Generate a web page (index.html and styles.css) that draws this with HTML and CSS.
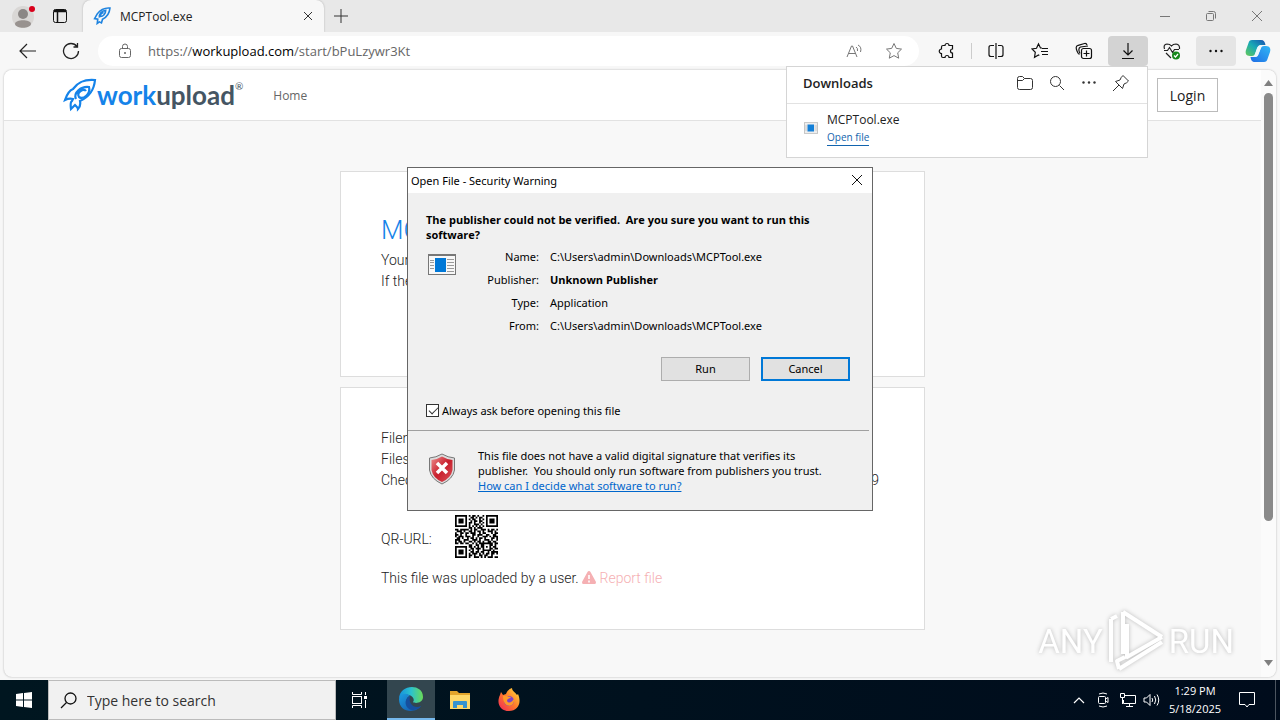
FILE: index.html
```html
<!doctype html>
<html lang="en">
  <head>
    <meta charset="UTF-8">
    <meta name="viewport" content="width=device-width, initial-scale=1.0">
    <title>MCPTool.exe</title>
    <link rel="stylesheet" href="styles.css">
  </head>
  <body>
    <!-- tab strip -->
    <header class="tabstrip">
      <button class="avatar" aria-label="Profile">
        <svg width="24" height="26" viewBox="0 0 24 26"><circle cx="11" cy="14" r="11" fill="#d9d7d5"/><circle cx="11" cy="11" r="5" fill="#8b8785"/><path d="M3 21c0-5 16-5 16 0-1 5-15 5-16 0z" fill="#98928f"/><circle cx="20" cy="6" r="3" fill="#d9001b"/></svg>
      </button>
      <button class="workspaces" aria-label="Tab actions">
        <svg width="16" height="16" viewBox="0 0 16 16" fill="none" stroke="#111"><rect x="1.500" y="1.500" width="13" height="13" rx="2"/><path d="M2 3.500h12M2 2.500h12M5.500 4v10" stroke-width="1.500"/></svg>
      </button>
      <div class="tab">
        <svg class="rocket" width="18" height="18" viewBox="0 0 34 34" fill="none" stroke="#1e83df" stroke-width="3"><path d="M32 2C20 1 14 5 8 13L3 22l6 1-1 8 4-3 4 2 2-7c8-4 13-10 14-21z"/><path d="M12 20c-1-7 4-13 12-14 0 7-5 12-10 12 0-4 3-7 6-7"/></svg>
        <span class="tab-title">MCPTool.exe</span>
        <button class="tab-close" aria-label="Close tab">
          <svg width="10" height="10" viewBox="0 0 10 10" stroke="#333"><path d="M1 1l8 8M9 1L1 9"/></svg>
        </button>
      </div>
      <button class="new-tab" aria-label="New tab">
        <svg width="14" height="14" viewBox="0 0 14 14" stroke="#333"><path d="M7 0v14M0 7h14"/></svg>
      </button>
      <div class="window-controls">
        <button aria-label="Minimize"><svg width="10" height="10" viewBox="0 0 10 10" stroke="#777"><path d="M0 5.500h10"/></svg></button>
        <button aria-label="Restore"><svg width="12" height="12" viewBox="0 0 12 12" fill="none" stroke="#777"><rect x="1.500" y="3.500" width="7" height="7" rx="1"/><path d="M3.500 1.500h5q2 0 2 2v5"/></svg></button>
        <button aria-label="Close"><svg width="12" height="12" viewBox="0 0 12 12" stroke="#777"><path d="M1 1l10 10M11 1L1 11"/></svg></button>
      </div>
    </header>

    <!-- toolbar -->
    <nav class="toolbar">
      <button class="nav-button" aria-label="Back"><svg width="18" height="16" viewBox="0 0 18 16" fill="none" stroke="#222" stroke-width="1.200"><path d="M8 1L1 8l7 7M1 8h16"/></svg></button>
      <button class="nav-button" aria-label="Refresh"><svg width="18" height="18" viewBox="0 0 18 18" fill="none" stroke="#222" stroke-width="1.300"><path d="M15 4.500A7.500 7.500 0 1 0 16.500 9M15.500 1v4h-4"/></svg></button>
      <div class="address">
        <svg class="lock" width="14" height="16" viewBox="0 0 14 16" fill="none" stroke="#666"><rect x="1.500" y="5.500" width="11" height="9" rx="2"/><path d="M4.500 5.500V3.500a2.500 2.500 0 0 1 5 0v2"/><circle cx="7" cy="10" r="1" fill="#666" stroke="none"/></svg>
        <div class="url" role="textbox" contenteditable="true" spellcheck="false" aria-label="Address">https://<b>workupload.com</b>/start/bPuLzywr3Kt</div>
        <button class="address-button" aria-label="Read aloud"><svg width="16" height="16" viewBox="0 0 16 16" fill="none" stroke="#777"><path d="M1 14L5.500 3h1L11 14M2.500 10.500h7M10 4q2 1 1.500 4M12 2q4 2 2.500 7"/></svg></button>
        <button class="address-button" aria-label="Favorite"><svg width="18" height="18" viewBox="0 0 18 18" fill="none" stroke="#777" stroke-linejoin="round"><path d="M9 1.500l2.300 4.900 5.200.7-3.800 3.700 1 5.400L9 13.600l-4.700 2.600 1-5.400L1.500 7.100l5.200-.7z"/></svg></button>
      </div>
      <button class="tool-button" aria-label="Extensions"><svg width="18" height="18" viewBox="0 0 18 18" fill="none" stroke="#111" stroke-width="1.200"><path d="M5 3.500h2a2 2 0 0 1 4 0h3.500V7a2 2 0 0 0 0 4v4.500H11a2 2 0 0 0-4 0H5q-1.500 0-1.500-1.500v-2.500a2.200 2.200 0 0 1 0-4.500V5Q3.500 3.500 5 3.500"/></svg></button>
      <span class="divider"></span>
      <button class="tool-button" aria-label="Split screen"><svg width="18" height="18" viewBox="0 0 18 18" fill="none" stroke="#111" stroke-width="1.200"><path d="M7 3.500H4q-2 0-2 2v7q0 2 2 2h3M11 3.500h3q2 0 2 2v7q0 2-2 2h-3M9 1v16"/></svg></button>
      <button class="tool-button" aria-label="Favorites"><svg width="18" height="18" viewBox="0 0 18 18" fill="none" stroke="#111" stroke-width="1.200"><path d="M11 6L9.500 6 7.500 2 5.500 6.300l-4.500.7 3.300 3.300-.8 5 4-2.300.8.5M11 6.500h6M10 9.500h7M11 12.500h6"/></svg></button>
      <button class="tool-button" aria-label="Collections"><svg width="18" height="18" viewBox="0 0 18 18" fill="none" stroke="#111" stroke-width="1.200"><path d="M4.500 12.500C3 12.500 1 7 1.200 5.500q0-1.500 2-2.200L9.500 1.500q2-.3 2.500 1.500M5 11.500q-2.500-5 .5-6.500l7.500-1"/><rect x="6.500" y="6.500" width="10" height="10" rx="2"/><path d="M11.500 8.500v6M8.500 11.500h6"/></svg></button>
      <button class="tool-button pressed" aria-label="Downloads"><svg width="14" height="18" viewBox="0 0 14 18" fill="none" stroke="#111" stroke-width="1.200"><path d="M7 1v12M2.500 8.500L7 13l4.500-4.500M1 16.500h12"/></svg></button>
      <button class="tool-button" aria-label="Browser essentials"><svg width="18" height="18" viewBox="0 0 18 18" fill="none" stroke="#222" stroke-width="1.200"><path d="M1.500 7Q0 2.500 4 2q3 0 4.500 2Q10 2 13 2q4 .5 3.500 5M1 8.500h3.500l2-3 3 5 2-3H16M3 11l5 5"/><circle cx="13" cy="13.500" r="4" fill="#16871b" stroke="none"/><path d="M11 13.500l1.500 1.500 2.500-3" stroke="#fff"/></svg></button>
      <button class="tool-button active" aria-label="Settings and more"><svg width="16" height="4" viewBox="0 0 16 4" fill="#111"><circle cx="2.500" cy="2" r="1.200"/><circle cx="8" cy="2" r="1.200"/><circle cx="13.500" cy="2" r="1.200"/></svg></button>
      <button class="copilot" aria-label="Copilot">
        <svg width="26" height="24" viewBox="0 0 26 24">
          <defs>
            <linearGradient id="cp-a" x1="0" y1="1" x2="1" y2="0"><stop offset="0" stop-color="#65c958"/><stop offset=".5" stop-color="#18aab6"/><stop offset="1" stop-color="#174fb0"/></linearGradient>
            <linearGradient id="cp-b" x1="0" y1="1" x2="1" y2="0"><stop offset="0" stop-color="#1f6de5"/><stop offset="1" stop-color="#31b7f5"/></linearGradient>
          </defs>
          <path d="M7 1h9c3 0 4 2 4.500 5H17c-3 0-4 1-5 4l-2 5c-1 2-2 2-5 2-4 0-5-3-4-6L3.500 4C4 2 5 1 7 1z" fill="url(#cp-a)"/>
          <path d="M19 23h-9c-3 0-4-2-4.500-5H9c3 0 4-1 5-4l2-5c1-2 2-2 5-2 4 0 5 3 4 6l-2.500 7c-.5 2-1.500 3-3.500 3z" fill="url(#cp-b)"/>
          <path d="M12 9c1-2 2-3 4-3h1l-4 10c-1 2-2 2-4 2z" fill="#edf8fc"/>
        </svg>
      </button>
    </nav>

    <!-- web page -->
    <div class="viewport">
      <div class="site">
        <div class="site-header">
          <a class="logo" href="#">
            <svg width="34" height="34" viewBox="0 0 34 34" fill="none" stroke="#1583e9" stroke-width="2.200"><path d="M32 2C21 1 15 4 10 11q-5 2-8 11 4-2 8-1l-1 2q-2 1-1 8l4-4q3 3 3 4 3-3 2-8c9-4 14-10 15-21z"/><path d="M13 21c-3-6 5-13 13-12 2 7-6 13-10 10-3-5 5-9 7-6"/></svg>
            <span class="logo-work">work</span><span class="logo-upload">upload</span><sup>®</sup>
          </a>
          <a class="nav-link" href="#">Home</a>
          <button class="login">Login</button>
        </div>
        <main class="content">
          <section class="card card-download">
            <h1>MCPTool.exe</h1>
            <p>Your download</p>
            <p>If the download</p>
          </section>
          <section class="card card-info">
            <dl class="file-info">
              <dt>Filename:</dt><dd>MCPTool.exe</dd>
              <dt>Filesize:</dt><dd></dd>
              <dt>Checksum:</dt><dd class="checksum">9</dd>
            </dl>
            <div class="qr-row"><span class="qr-label">QR-URL:</span><svg id="qr" width="43" height="43" viewBox="0 0 25 25"></svg></div>
            <p>This file was uploaded by a user. <a class="report" href="#"><svg width="14" height="13" viewBox="0 0 14 13"><path d="M7 0q1 0 1.500 1L14 11q0 2-1 2H1q-1 0-1-2L5.500 1Q6 0 7 0z" fill="#f5b0b3"/><path d="M7 4v4M7 9.500v2" stroke="#fff" stroke-width="1.600"/></svg> Report file</a></p>
          </section>
        </main>
      </div>
      <div class="scrollbar">
        <svg width="9" height="6" viewBox="0 0 9 6"><path d="M0 6l4.500-6L9 6z" fill="#808080"/></svg>
        <div class="scroll-thumb"></div>
        <svg width="9" height="6" viewBox="0 0 9 6"><path d="M0 0l4.500 6L9 0z" fill="#808080"/></svg>
      </div>
      <div class="watermark">
        <span>ANY</span>
        <svg width="58" height="64" viewBox="0 0 58 64" fill="none" stroke="#fff" stroke-width="4" stroke-linejoin="round"><path d="M16 3v42M16 3l39 25M20 15v33l35-20M4 10v43M4 10l6-3M12 60l43-27M12 60l-2-8 8-4"/></svg>
        <span>RUN</span>
      </div>
    </div>

    <!-- taskbar -->
    <footer class="taskbar">
      <button class="task start" aria-label="Start"><svg width="16" height="16" viewBox="0 0 16 16" fill="#fff"><path d="M0 2l7-1v6.500H0zM8 1l8-1v7.500H8zM0 8.500h7V15l-7-1zM8 8.500h8V16l-8-1z"/></svg></button>
      <label class="search">
        <svg width="17" height="17" viewBox="0 0 17 17" fill="none" stroke="#111" stroke-width="1.300"><circle cx="10.500" cy="6.500" r="5.500"/><path d="M6.500 10.500L1 16"/></svg>
        <input type="text" placeholder="Type here to search" aria-label="Search">
      </label>
      <button class="task task-view" aria-label="Task view"><svg width="18" height="16" viewBox="0 0 18 16" fill="none" stroke="#fff"><path d="M1.500 0v2.500h9V0M1.500 16v-2.500h9V16M14.500 0v3M14.500 8v8"/><rect x="1.500" y="4.500" width="9" height="7"/><path d="M13 5.500h3" stroke-width="3"/></svg></button>
      <button class="task current" aria-label="Microsoft Edge">
        <svg width="24" height="24" viewBox="0 0 24 24">
          <defs>
            <linearGradient id="edge-a"><stop offset="0" stop-color="#1590dd"/><stop offset=".5" stop-color="#2bc2cf"/><stop offset="1" stop-color="#6adb57"/></linearGradient>
            <linearGradient id="edge-b" x1="0" y1="0" x2="1" y2="1"><stop offset="0" stop-color="#1b9de2"/><stop offset="1" stop-color="#1450a4"/></linearGradient>
          </defs>
          <path d="M0 12C0-3 24-4 24 10c0 6-8 7-10 5 2-2 0-6-4-7C5 7 1 9 0 12z" fill="url(#edge-a)"/>
          <path d="M0 12c1-5 7-7 11-3-3 0-4 4-3 7 2 5 9 7 14 3-4 7-22 8-22-7z" fill="url(#edge-b)"/>
          <path d="M11 9c-7 3-5 13 2 14 4 0 8-2 9-4-6 3-13-1-11-10z" fill="#164f9d"/>
        </svg>
      </button>
      <button class="task" aria-label="File Explorer"><svg width="22" height="20" viewBox="0 0 22 20"><path d="M1 1h7l2 2h11v16H1z" fill="#e3a52b"/><path d="M1 5h20v14H1z" fill="#ffd868"/><path d="M4 18v-6q0-1 1-1h12q1 0 1 1v6h-4v-3H8v3z" fill="#3793ce"/></svg></button>
      <button class="task" aria-label="Firefox">
        <svg width="24" height="24" viewBox="0 0 24 24">
          <defs><linearGradient id="ff" x1="1" y1="0" x2="0" y2="1"><stop offset="0" stop-color="#ffe33c"/><stop offset=".5" stop-color="#ff7a2b"/><stop offset="1" stop-color="#f0235a"/></linearGradient></defs>
          <path d="M4 4l2 3 3-1c1-3 3-5 6-6 0 3 3 4 5 7l1-1c4 9 0 17-9 17S-1 15 3 7z" fill="url(#ff)"/>
          <circle cx="12" cy="13" r="5" fill="#7d42c8"/>
          <path d="M6 8c4-1 5 1 8 1-1 2-4 1-4 4 2 3 5 1 7-2 1 9-11 10-11-3z" fill="#ff9a29"/>
        </svg>
      </button>
      <div class="tray">
        <button aria-label="Show hidden icons"><svg width="12" height="8" viewBox="0 0 12 8" fill="none" stroke="#fff" stroke-width="1.200"><path d="M1 7l5-5 5 5"/></svg></button>
        <button aria-label="Meet Now"><svg width="14" height="16" viewBox="0 0 14 16" fill="none" stroke="#fff"><rect x="2.500" y="4.500" width="7" height="7" rx="1"/><path d="M9.500 7L12 5.500v5L9.500 9M3 2q4-2 8 0M3 14q4 2 8 0"/></svg></button>
        <button aria-label="Network"><svg width="17" height="14" viewBox="0 0 17 14" fill="none" stroke="#fff"><path d="M6 2.500h10.500v8H4.500V7M10.500 11v2M7 13.500h7"/><path d="M1.500.500h4v4h-4zM3.500 5v6"/></svg></button>
        <button aria-label="Volume"><svg width="17" height="14" viewBox="0 0 17 14" fill="none" stroke="#fff"><path d="M1 5v4h2.500L7 12.500v-11L3.500 5zM9 5q1.500 2 0 4M11.500 3q2.500 4 0 8M14 1.500q3.500 5.500 0 11"/></svg></button>
        <div class="clock"><span>1:29 PM</span><span>5/18/2025</span></div>
        <button class="notifications" aria-label="Notifications"><svg width="16" height="16" viewBox="0 0 16 16" fill="none" stroke="#fff"><path d="M.5.500h15v12H10l-2 2.500-2-2.500H.5z"/></svg></button>
        <span class="show-desktop"></span>
      </div>
    </footer>

    <!-- downloads flyout -->
    <aside class="downloads">
      <div class="downloads-header">
        <h2>Downloads</h2>
        <button aria-label="Open downloads folder"><svg width="18" height="16" viewBox="0 0 18 16" fill="none" stroke="#333"><path d="M1.500 4v-.5q0-2 2-2h3l2 2h6q2 0 2 2v7q0 2-2 2h-11q-2 0-2-2zM1.500 5.500h5l2-2"/></svg></button>
        <button aria-label="Search downloads"><svg width="16" height="16" viewBox="0 0 16 16" fill="none" stroke="#333"><circle cx="6.500" cy="6.500" r="5"/><path d="M10.500 10.500l4.500 4.500"/></svg></button>
        <button aria-label="More options"><svg width="14" height="4" viewBox="0 0 14 4" fill="#333"><circle cx="1.500" cy="1.500" r="1.200"/><circle cx="7" cy="1.500" r="1.200"/><circle cx="12.500" cy="1.500" r="1.200"/></svg></button>
        <button aria-label="Pin"><svg width="18" height="18" viewBox="0 0 18 18" fill="none" stroke="#333"><path d="M11 1.500L16.500 7q-1.500 2-4.500 3l-1.500 4.500-7-7L8 6q1-3 3-4.500zM7 11l-6 6"/></svg></button>
      </div>
      <div class="download-item">
        <svg width="14" height="12" viewBox="0 0 28 22"><rect x=".5" y=".5" width="27" height="21" fill="#eee" stroke="#999"/><rect x="7" y="4" width="13" height="14" fill="#1480d8"/><path d="M2 7h4M2 11h4M2 15h4M21 7h5M21 11h5M21 15h5" stroke="#aaa"/></svg>
        <div>
          <div class="download-name">MCPTool.exe</div>
          <a href="#">Open file</a>
        </div>
      </div>
    </aside>

    <!-- security warning -->
    <div class="dialog" role="dialog" aria-labelledby="dialog-title">
      <div class="dialog-title">
        <span id="dialog-title">Open File - Security Warning</span>
        <button aria-label="Close"><svg width="12" height="12" viewBox="0 0 12 12" stroke="#111"><path d="M1 1l10 10M11 1L1 11"/></svg></button>
      </div>
      <div class="dialog-body">
        <h3>The publisher could not be verified.&nbsp; Are you sure you want to run this software?</h3>
        <div class="details">
          <svg class="app-icon" width="28" height="21" viewBox="0 0 28 21"><rect x=".5" y=".5" width="27" height="20" fill="#f7f7f7" stroke="#777"/><path d="M0 1h28" stroke="#777" stroke-width="2"/><rect x="7" y="4" width="11" height="14" fill="#0078d7"/><path d="M2 6.500h4M2 8.500h4M2 11.500h4M2 14.500h4M19 5.500h7M19 8.500h7M19 11.500h7M19 14.500h7M19 17.500h7" stroke="#999"/></svg>
          <table>
            <tr><th>Name:</th><td>C:\Users\admin\Downloads\MCPTool.exe</td></tr>
            <tr><th>Publisher:</th><td><b>Unknown Publisher</b></td></tr>
            <tr><th>Type:</th><td>Application</td></tr>
            <tr><th>From:</th><td>C:\Users\admin\Downloads\MCPTool.exe</td></tr>
          </table>
        </div>
        <div class="dialog-buttons">
          <button>Run</button>
          <button class="default">Cancel</button>
        </div>
        <label class="always-ask"><input type="checkbox" checked> Always ask before opening this file</label>
      </div>
      <div class="dialog-footer">
        <svg class="shield" width="28" height="32" viewBox="0 0 28 32">
          <defs><linearGradient id="shield" x1="0" y1="0" x2="1" y2="1"><stop offset="0" stop-color="#ee8d8d"/><stop offset=".5" stop-color="#c81e2c"/><stop offset="1" stop-color="#d9535a"/></linearGradient></defs>
          <path d="M14 1q6 3.500 12.500 4v12Q25 26 14 31 3 26 1.500 17V5Q8 4.500 14 1z" fill="#dcdcdc" stroke="#777"/>
          <path d="M14 3.500Q19 6.500 24.500 7v10Q23 25 14 29 5 25 3.500 17V7Q9 6.500 14 3.500z" fill="url(#shield)"/>
          <path d="M9 10l10 10M19 10L9 20" stroke="#fff" stroke-width="3.500"/>
        </svg>
        <p>This file does not have a valid digital signature that verifies its publisher.&nbsp; You should only run software from publishers you trust.<br><a href="#">How can I decide what software to run?</a></p>
      </div>
    </div>

    <script src="qr.js"></script>
  </body>
</html>
```

FILE: styles.css
```css
* {
  margin: 0;
  padding: 0;
  box-sizing: border-box;
}

body {
  position: relative;
  display: flex;
  flex-direction: column;
  height: 100vh;
  overflow: hidden;
  font-family: "Open Sans", "Noto Sans", sans-serif;
  font-size: 12px;
  color: #222;
  background: #f7f7f7;
}

button {
  display: flex;
  align-items: center;
  justify-content: center;
  border: none;
  background: none;
  font: inherit;
  color: inherit;
}

svg {
  flex-shrink: 0;
}

/* Tab strip */
.tabstrip {
  display: flex;
  height: 32px;
  background: #e8e8e8;
}

.avatar {
  width: 48px;
}

.workspaces {
  width: 24px;
}

.tab {
  display: flex;
  align-items: center;
  width: 241px;
  margin-left: 11px;
  padding: 0 8px 0 10px;
  border-radius: 8px 8px 0 0;
  background: #f7f7f7;
  box-shadow: 0 0 2px #aaa;
}

.tab-title {
  flex: 1;
  margin-left: 9px;
  font-size: 12px;
}

.tab-close {
  width: 16px;
  height: 16px;
}

.new-tab {
  width: 34px;
}

.window-controls {
  display: flex;
  margin-left: auto;
}

.window-controls button {
  width: 46px;
}

/* Toolbar */
.toolbar {
  position: relative;
  display: flex;
  align-items: center;
  gap: 4px;
  height: 38px;
  padding: 0 4px 0 12px;
  background: #f7f7f7;
}

.nav-button {
  width: 32px;
  height: 30px;
  margin-right: 7px;
}

.address {
  flex: 1;
  display: flex;
  align-items: center;
  height: 30px;
  margin-right: 4px;
  padding: 0 5px 0 20px;
  border-radius: 15px;
  background: #fff;
}

.url {
  flex: 1;
  margin-left: 16px;
  font-size: 13px;
  color: #666;
  white-space: nowrap;
}

.url b {
  font-weight: 400;
  color: #000;
}

.address-button {
  width: 40px;
}

.tool-button {
  width: 40px;
  height: 30px;
  border-radius: 4px;
}

.pressed {
  background: #d3d3d3;
}

.active {
  background: #e5e5e5;
}

.divider {
  width: 1px;
  height: 16px;
  background: #ccc;
}

.copilot {
  width: 36px;
}

/* Web page */
.viewport {
  position: relative;
  flex: 1;
  display: flex;
  margin: 0 4px 3px;
  border-radius: 8px;
  background: #f8f8f8;
  box-shadow: 0 0 2px #aaa;
  overflow: hidden;
}

.site {
  flex: 1;
  font-family: Roboto, sans-serif;
  font-size: 14px;
  font-weight: 300;
  line-height: 21px;
}

.site-header {
  display: flex;
  align-items: center;
  height: 51px;
  padding: 0 43px 0 59px;
  border-bottom: 1px solid #e2e2e2;
  background: #fff;
}

.logo {
  display: flex;
  align-items: center;
  font-family: Lato, sans-serif;
  font-size: 26px;
  font-weight: 700;
  text-decoration: none;
}

.logo-work {
  color: #1583e9;
}

.logo-upload {
  color: #455563;
}

.logo sup {
  align-self: flex-start;
  font-size: 10px;
  font-weight: 400;
  line-height: 16px;
  color: #455563;
}

.nav-link {
  margin-left: 30px;
  font-family: "Open Sans", sans-serif;
  font-size: 12px;
  font-weight: 400;
  color: #666;
  text-decoration: none;
}

.login {
  width: 61px;
  height: 34px;
  margin-left: auto;
  border: 1px solid #bbb;
  background: #fff;
  font-family: "Open Sans", sans-serif;
  font-size: 14px;
  font-weight: 400;
}

.content {
  width: 585px;
  margin: 50px auto 0;
}

.card {
  padding: 40px;
  border: 1px solid #ddd;
  background: #fff;
}

.card-download {
  height: 206px;
}

.card-info {
  height: 243px;
  margin-top: 10px;
}

.card h1 {
  margin-bottom: 2px;
  font-size: 26px;
  font-weight: 300;
  line-height: 36px;
  color: #1583e9;
}

.file-info {
  display: grid;
  grid-template-columns: 74px 1fr;
  grid-auto-rows: 21px;
}

.checksum {
  padding-right: 5px;
  text-align: right;
}

.qr-row {
  display: flex;
  align-items: center;
  margin: 24px 0 10px;
}

.qr-label {
  width: 74px;
  padding-top: 5px;
}

.report {
  color: #f5b0b3;
  text-decoration: none;
}

.report svg {
  vertical-align: -1px;
}

.scrollbar {
  display: flex;
  flex-direction: column;
  align-items: center;
  width: 15px;
  padding: 10px 0 11px;
  background: #fbfbfb;
}

.scroll-thumb {
  width: 9px;
  height: 428px;
  margin: 7px 0 auto;
  border-radius: 5px;
  background: #8a8a8a;
}

.watermark {
  position: absolute;
  right: 42px;
  bottom: 4px;
  display: flex;
  align-items: center;
  gap: 4px;
  font-family: Roboto, sans-serif;
  font-size: 33px;
  color: #fff;
  filter: drop-shadow(0 0 2px #bbb);
}

/* Taskbar */
.taskbar {
  display: flex;
  height: 40px;
  color: #fff;
  background: linear-gradient(90deg, #001620, #000c1c);
}

.task {
  width: 48px;
  margin-right: 1px;
}

.start {
  margin-right: 0;
}

.task-view {
  margin-right: 3px;
}

.current {
  border-bottom: 2px solid #76b9ed;
  background: #33464f;
}

.search {
  display: flex;
  align-items: center;
  width: 288px;
  padding-left: 11px;
  border: 1px solid #bbb;
  background: #f1f1f1;
}

.search input {
  flex: 1;
  margin-left: 10px;
  border: none;
  background: none;
  font: inherit;
  font-size: 14px;
}

.search input::placeholder {
  color: #333;
}

.tray {
  display: flex;
  margin-left: auto;
}

.tray button {
  width: 24px;
}

.clock {
  display: flex;
  flex-direction: column;
  justify-content: center;
  width: 64px;
  font-size: 11px;
  line-height: 18px;
  text-align: center;
}

.tray .notifications {
  width: 40px;
}

.show-desktop {
  width: 5px;
  margin-left: 8px;
  border-left: 1px solid #4c5560;
}

/* Downloads flyout */
.downloads {
  position: absolute;
  top: 66px;
  right: 132px;
  width: 362px;
  border: 1px solid #d5d5d5;
  background: #fff;
}

.downloads-header {
  display: flex;
  align-items: center;
  height: 37px;
  padding: 0 10px 4px 16px;
  border-bottom: 1px solid #e2e2e2;
}

.downloads-header h2 {
  flex: 1;
  font-size: 13px;
  font-weight: 600;
}

.downloads-header button {
  width: 32px;
}

.download-item {
  display: flex;
  align-items: center;
  gap: 9px;
  height: 53px;
  padding: 0 0 5px 17px;
}

.download-name {
  line-height: 17px;
}

.download-item a {
  display: inline-block;
  border-bottom: 1px solid #1264ae;
  font-size: 10px;
  line-height: 15px;
  color: #1264ae;
  text-decoration: none;
}

/* Security warning */
.dialog {
  position: absolute;
  top: 167px;
  left: 50%;
  width: 466px;
  transform: translateX(-50%);
  border: 1px solid #666;
  font-family: "Noto Sans", "Open Sans", sans-serif;
  font-size: 11px;
  line-height: 15px;
  color: #000;
  background: #f0f0f0;
}

.dialog-title {
  display: flex;
  align-items: center;
  justify-content: space-between;
  height: 25px;
  padding: 0 0 1px 3px;
  background: #fff;
}

.dialog-title button {
  width: 30px;
}

.dialog-body {
  padding: 19px 22px 12px 18px;
}

.dialog h3,
.dialog b {
  font-family: "Open Sans", sans-serif;
  font-size: 11px;
  font-weight: 700;
}

.details {
  display: flex;
  margin: 3px 0 20px 2px;
}

.app-icon {
  margin: 9px 0 0;
}

table {
  border-collapse: collapse;
}

th {
  width: 83px;
  font-weight: 400;
  text-align: right;
}

td {
  padding-left: 11px;
}

tr {
  height: 23px;
}

.dialog-buttons {
  display: flex;
  justify-content: flex-end;
  gap: 11px;
}

.dialog-buttons button {
  width: 89px;
  height: 24px;
  padding-bottom: 1px;
  border: 1px solid #adadad;
  background: #e1e1e1;
}

.dialog-buttons .default {
  border: 2px solid #0078d7;
}

.always-ask {
  display: flex;
  align-items: center;
  gap: 3px;
  margin-top: 22px;
}

.always-ask input {
  appearance: none;
  width: 13px;
  height: 13px;
  border: 1px solid #333;
  background: #fff;
}

.always-ask input:checked::before {
  content: "";
  display: block;
  width: 4px;
  height: 8px;
  margin: 0 0 0 4px;
  border: solid #333;
  border-width: 0 1px 1px 0;
  transform: rotate(45deg);
}

.dialog-footer {
  display: flex;
  margin-right: 3px;
  padding: 17px 26px 17px 20px;
  border-top: 1px solid #a0a0a0;
}

.shield {
  margin: 5px 22px 0 0;
}

.dialog-footer a {
  color: #0066cc;
}
```

FILE: qr.js
```javascript
// one string per row, # is a dark module
const rows = [
  "####### # ## #  # #######",
  "#     #  ## # ##  #     #",
  "# ### # # ##  # # # ### #",
  "# ### #  # ## ##  # ### #",
  "# ### # ## #  # # # ### #",
  "#     # #  ### #  #     #",
  "####### # # # # # #######",
  "        ## # ###         ",
  "## ##### # ##  ### # ## #",
  " ### #  ## # ## #  ### # ",
  "#  ## ## ###  # ##   # ##",
  "## #  #   ## ###  ##  ## ",
  "# ### ### #  #  ### # ###",
  " ## #  # ## # ## #   ## #",
  "###  ###  ### #  ### #  #",
  "# ## #  ## # ## #  ## ## ",
  "## ## ##  # # ######## ##",
  "        ##  ## ##   ## # ",
  "####### ## # # ## # # ## ",
  "#     #  ## ### #   ## ##",
  "# ### # # #  #  ##### #  ",
  "# ### #  ## ## ##  # ####",
  "# ### # # ### # # ## ## #",
  "#     # ## #  ## ##  #   ",
  "####### #  ### # # ### ##",
];

let d = "";
rows.forEach((row, y) => {
  [...row].forEach((c, x) => {
    if (c === "#") d += `M${x} ${y}h1v1h-1z`;
  });
});
const path = document.createElementNS("http://www.w3.org/2000/svg", "path");
path.setAttribute("d", d);
document.getElementById("qr").appendChild(path);
```
